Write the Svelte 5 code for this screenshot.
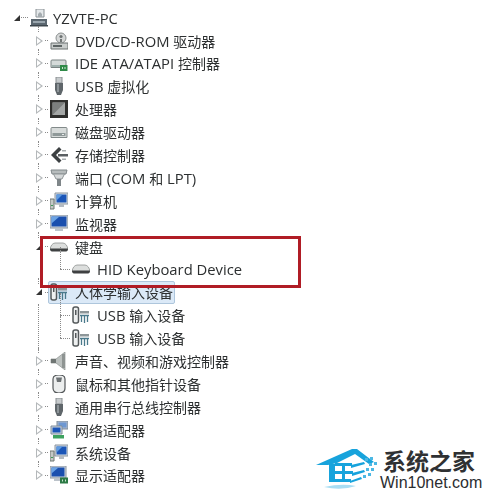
<script lang="ts">
    interface Node {
        label: string;
        icon: string;
        expanded?: boolean;
        selected?: boolean;
        children?: Node[];
    }

    const devices: Node[] = [
        { label: 'DVD/CD-ROM 驱动器', icon: 'dvd' },
        { label: 'IDE ATA/ATAPI 控制器', icon: 'ide' },
        { label: 'USB 虚拟化', icon: 'usb' },
        { label: '处理器', icon: 'cpu' },
        { label: '磁盘驱动器', icon: 'disk' },
        { label: '存储控制器', icon: 'storage' },
        { label: '端口 (COM 和 LPT)', icon: 'port' },
        { label: '计算机', icon: 'computer' },
        { label: '监视器', icon: 'monitor' }
    ];

    const keyboard: Node = {
        label: '键盘',
        icon: 'keyboard',
        expanded: true,
        children: [{ label: 'HID Keyboard Device', icon: 'keyboard' }]
    };

    const rest: Node[] = [
        {
            label: '人体学输入设备',
            icon: 'hid',
            expanded: true,
            selected: true,
            children: [
                { label: 'USB 输入设备', icon: 'hid' },
                { label: 'USB 输入设备', icon: 'hid' }
            ]
        },
        { label: '声音、视频和游戏控制器', icon: 'audio' },
        { label: '鼠标和其他指针设备', icon: 'mouse' },
        { label: '通用串行总线控制器', icon: 'usb' },
        { label: '网络适配器', icon: 'net' },
        { label: '系统设备', icon: 'computer' },
        { label: '显示适配器', icon: 'display' }
    ];

    // latin runs sit a bit larger than the CJK ones in the original font
    const runs = (text: string) => text.split(/([\x00-\x7f]+)/).filter(Boolean);
</script>

{#snippet text(label: string)}
    <span class="label">
        {#each runs(label) as run}
            <span class:latin={/^[\x00-\x7f]/.test(run)}>{run}</span>
        {/each}
    </span>
{/snippet}

{#snippet glyph(name: string)}
    <svg class="icon" viewBox="0 0 18 18" width="18" height="18">
        {#if name === 'root'}
            <path d="M6 0h8v8H6z" fill="#e4e8ea" stroke="#8b9296" />
            <path d="M8 5l2-2 2 2v3H8z" fill="#a5acb0" />
            <path d="M1 10h16v6H1z" fill="#5b6770" />
            <path d="M3 12h12v2H3z" fill="#9aa6ae" />
            <path d="M0 16h18v1.500H0z" fill="#3d464d" />
        {:else if name === 'dvd'}
            <circle cx="11" cy="6" r="5" fill="#d6d8d8" stroke="#8a8f8f" />
            <circle cx="11" cy="4.500" r="1.600" fill="#6f7474" />
            <path d="M11 7v3" stroke="#6f7474" stroke-width="2" />
            <path d="M1 11h17v6H1z" fill="#c9cdcc" stroke="#6c7272" />
            <path d="M3 13h9v2H3z" fill="#5d6464" />
        {:else if name === 'ide'}
            <path d="M1 7q0-1 1-1h13q1 0 1 1v6.500H1z" fill="#d5dad9" stroke="#7b8383" />
            <path d="M2 11h13v2H2z" fill="#9fb0ad" />
            <path d="M10 11h7.500v6H10z" fill="#2f8a48" />
            <path d="M12 13h1v2h-1zM14.500 13h1v2h-1z" fill="#c8e6cf" />
        {:else if name === 'usb'}
            <path d="M6 0h6v6H6z" fill="#c7cbcd" stroke="#8a8f92" />
            <path d="M5 6h8v7l-2 5H7l-2-5z" fill="#5f666a" />
            <path d="M7 7h2v8H7z" fill="#8d9498" />
        {:else if name === 'cpu'}
            <path d="M0 0h18v18H0z" fill="#2e2e2c" />
            <path d="M2.500 2.500h12.500v12.500H2.500z" fill="#a4a7a6" />
            <path d="M2.500 2.500h12.500l-12.500 12.500z" fill="#7c7f7e" />
        {:else if name === 'disk'}
            <path d="M1 5.500q0-1 1-1h14q1 0 1 1v9H1z" fill="#d7dbda" stroke="#828a8a" />
            <path d="M2.500 10h13v3h-13z" fill="#8f9999" />
            <path d="M12 11h2v1h-2z" fill="#e9ecec" />
        {:else if name === 'storage'}
            <path d="M9 1L1 9l8 8 2.500-2.500L6 9l5.500-5.500z" fill="#3c4042" />
            <path d="M8 8h10v2.500H8z" fill="#5a5f62" />
            <path d="M12 4h4v1.500h-4zM12 12.500h4V14h-4z" fill="#a8adaf" />
        {:else if name === 'port'}
            <path d="M1 1h16l-1 4H2z" fill="#b7bcbd" stroke="#80878a" />
            <path d="M3.500 5h11l-2.500 5H6z" fill="#d5d8d9" stroke="#8f9597" />
            <path d="M7 10h4v7H7z" fill="#7f8689" />
        {:else if name === 'computer'}
            <path d="M5 1h13v11H5z" fill="#d8dfe6" stroke="#8a949e" />
            <path d="M6.500 2.500h10v8h-10z" fill="#1b56b8" />
            <path d="M6.500 2.500h6l-6 6z" fill="#5f9be0" />
            <path d="M9 12h5v3H9z" fill="#b4bbc2" />
            <path d="M0 7h4v10H0z" fill="#c4c9c6" stroke="#6f7772" />
            <path d="M1 13h2v1H1z" fill="#3f9a58" />
        {:else if name === 'monitor'}
            <path d="M0 0h18v13H0z" fill="#cdd5dd" stroke="#8a949e" />
            <path d="M1.500 1.500h15v10h-15z" fill="#1a4fae" />
            <path d="M1.500 1.500h8l-8 7z" fill="#6ca4e4" />
            <path d="M5 13h8v3H5z" fill="#bcc3ca" />
        {:else if name === 'keyboard'}
            <path d="M0 11.500Q1 5.500 5 5h8q4 .5 5 6.500z" fill="#dcdedd" stroke="#8f9392" stroke-width=".8" />
            <path d="M0 10.500h18q0 3-2 3H2q-2 0-2-3z" fill="#3f4142" />
        {:else if name === 'hid'}
            <rect x="1" y="1" width="5.500" height="16" rx="2" fill="#eef0f0" stroke="#54595b" stroke-width="1.500" />
            <path d="M3 4h1.500v5H3z" fill="#54595b" />
            <path d="M8 5h9v2.500H8z" fill="#8d9699" />
            <path d="M8 9.500h9M9.500 9.500V16M12.500 9.500V17M15.500 9.500V16" stroke="#4b7a8c" stroke-width="1.300" fill="none" />
        {:else if name === 'audio'}
            <path d="M1 7h5l9-7v18l-9-7H1z" fill="#bcc1bf" stroke="#8c9290" stroke-width=".7" />
            <path d="M1 7h5v4H1z" fill="#6f7573" />
            <path d="M12 2h3v14h-3z" fill="#8e9492" />
        {:else if name === 'mouse'}
            <path d="M3 4q0-4 6-4t6 4v9q0 5-6 5t-6-5z" fill="#eceeee" stroke="#54585a" stroke-width="1.200" />
            <path d="M6 2.500h6L11 7H7z" fill="#6d7274" />
        {:else if name === 'net'}
            <path d="M7 0h11v8H7z" fill="#a9b8cc" stroke="#7f8c9b" />
            <path d="M8.500 1.500h8v5h-8z" fill="#6d97d2" />
            <path d="M1 5h11v8H1z" fill="#cdd5dd" stroke="#7f8c9b" />
            <path d="M2.500 6.500h8v5h-8z" fill="#1b56b8" />
            <path d="M3 14h11v3.500H3z" fill="#3ea25f" />
        {:else if name === 'display'}
            <path d="M0 0h16v12H0z" fill="#cdd5dd" stroke="#8a949e" />
            <path d="M1.500 1.500h13v9h-13z" fill="#1a4fae" />
            <path d="M1.500 1.500h7l-7 6z" fill="#6ca4e4" />
            <path d="M4 12h8v3H4z" fill="#bcc3ca" />
            <path d="M10 11.500h8v6h-8z" fill="#2c7a45" />
            <path d="M12 13.500h1v2h-1zM15 13.500h1v2h-1z" fill="#c8e6cf" />
        {/if}
    </svg>
{/snippet}

{#snippet row(node: Node)}
    <div class="row lvl1">
        <span class="twist" class:open={node.expanded}></span>
        <span class="stub"></span>
        <span class="item" class:selected={node.selected}>
            {@render glyph(node.icon)}
            {@render text(node.label)}
        </span>
    </div>
    {#if node.children}
        <div class="children">
            {#each node.children as child}
                <div class="row lvl2">
                    <span class="stub"></span>
                    <span class="item">
                        {@render glyph(child.icon)}
                        {@render text(child.label)}
                    </span>
                </div>
            {/each}
        </div>
    {/if}
{/snippet}

<div class="page">
    <div class="tree">
        <div class="row lvl0">
            <span class="twist open"></span>
            <span class="stub"></span>
            <span class="item">
                {@render glyph('root')}
                {@render text('YZVTE-PC')}
            </span>
        </div>
        {#each devices as node}
            {@render row(node)}
        {/each}
        <div class="callout">
            {@render row(keyboard)}
        </div>
        {#each rest as node}
            {@render row(node)}
        {/each}
    </div>

    <div class="watermark">
        <svg class="logo" viewBox="0 0 64 44" width="64" height="44">
            <path d="M0 17L36 1h5l17 13-5 2-14-10-18 9-9 2z" fill="#17a3dc" />
            <path d="M13 16h6v18h-6z" fill="#17a3dc" />
            <path d="M19 15h17v3H19zM19 23h18v3H19zM19 31h16v3H19zM26 16h3v17h-3z" fill="#17a3dc" />
            <path d="M35 17l13-3 1 2-14 4zM36 25l12-3 1 2-13 4zM34 33l11-4 1 2-12 4z" fill="#17a3dc" />
            <path d="M49 10h3v3h-3zM54 9h3v3h-3zM53 15h3v3h-3zM58 14h3v3h-3zM50 20h3v3h-3zM55 20h3v3h-3zM47 27h3v3h-3zM52 25h3v3h-3z" fill="#4cb8e4" />
            <path d="M8 39q18-4 32-1q-15 5-32 1z" fill="#a8ddf3" />
        </svg>
        <div class="brand">
            <span class="brand-cn">系统之家</span>
            <span class="brand-en">Win10net.com</span>
        </div>
    </div>
</div>

<style>
    :global(body) {
        margin: 0;
        background: #fff;
    }

    .page {
        position: relative;
        width: 484px;
        height: 496px;
        overflow: hidden;
        background: #fff;
        font-family: "Open Sans", "Noto Sans CJK SC", sans-serif;
        color: #2c2f30;
    }

    .tree {
        padding-top: 6.2px;
        filter: blur(0.4px);
    }

    .row {
        position: relative;
        display: flex;
        align-items: center;
        height: 22.9px;
        font-size: 14px;
        white-space: nowrap;
    }

    .lvl0 { padding-left: 14px; }
    .lvl1 { padding-left: 36px; }
    .lvl2 { padding-left: 60px; }

    .latin {
        font-size: 14.8px;
    }

    .lvl1::before {
        content: "";
        position: absolute;
        left: 38px;
        top: -3px;
        height: 6px;
        border-left: 1px dotted #8a8a8a;
    }

    .twist {
        width: 0;
        height: 0;
        box-sizing: content-box;
        border-style: solid;
        border-width: 5px 0 5px 7px;
        border-color: transparent transparent transparent #b4b8ba;
        position: relative;
    }

    .twist::after {
        content: "";
        position: absolute;
        left: -6px;
        top: -3px;
        border-style: solid;
        border-width: 3px 0 3px 4px;
        border-color: transparent transparent transparent #fff;
    }

    .twist.open {
        border-width: 0 0 6px 6px;
        border-color: transparent transparent #333 transparent;
        margin-right: 1px;
    }

    .twist.open::after {
        display: none;
    }

    .stub {
        width: 3px;
        margin-left: 2px;
        border-top: 1px dotted #8a8a8a;
    }

    .lvl0 .stub {
        width: 7px;
        margin: 0;
    }

    .lvl2 .stub {
        width: 10px;
        margin: 0;
    }

    .lvl2::before {
        content: "";
        position: absolute;
        left: 60px;
        top: -11px;
        height: 22px;
        border-left: 1px dotted #8a8a8a;
    }

    .children {
        position: relative;
    }

    .children::before {
        content: "";
        position: absolute;
        left: 38px;
        top: 0;
        bottom: 0;
        border-left: 1px dotted #8a8a8a;
    }

    .callout .children::before {
        display: none;
    }

    .item {
        display: flex;
        align-items: center;
        gap: 7px;
        height: 21px;
        padding: 0 1px;
        border: 1px solid transparent;
        border-radius: 2px;
    }

    .lvl0 .item {
        gap: 5px;
    }

    .selected {
        background: #dbe9f7;
        border-color: #aec6dc;
    }

    .icon {
        flex: none;
    }

    .callout {
        position: relative;
    }

    .callout::after {
        content: "";
        position: absolute;
        z-index: 1;
        left: 40px;
        top: 1px;
        width: 255px;
        height: 46px;
        border: 3px solid #b01c25;
        pointer-events: none;
    }

    .watermark {
        position: absolute;
        left: 316px;
        top: 448px;
        display: flex;
    }

    .brand {
        display: flex;
        flex-direction: column;
        line-height: 1;
    }

    .brand-cn {
        margin: 2px 0 0 3px;
        font-size: 23px;
        font-weight: 700;
        color: #2f3133;
    }

    .brand-en {
        margin-top: 2px;
        font-family: "Liberation Sans", sans-serif;
        font-size: 16px;
        color: #2b2d2f;
    }
</style>
